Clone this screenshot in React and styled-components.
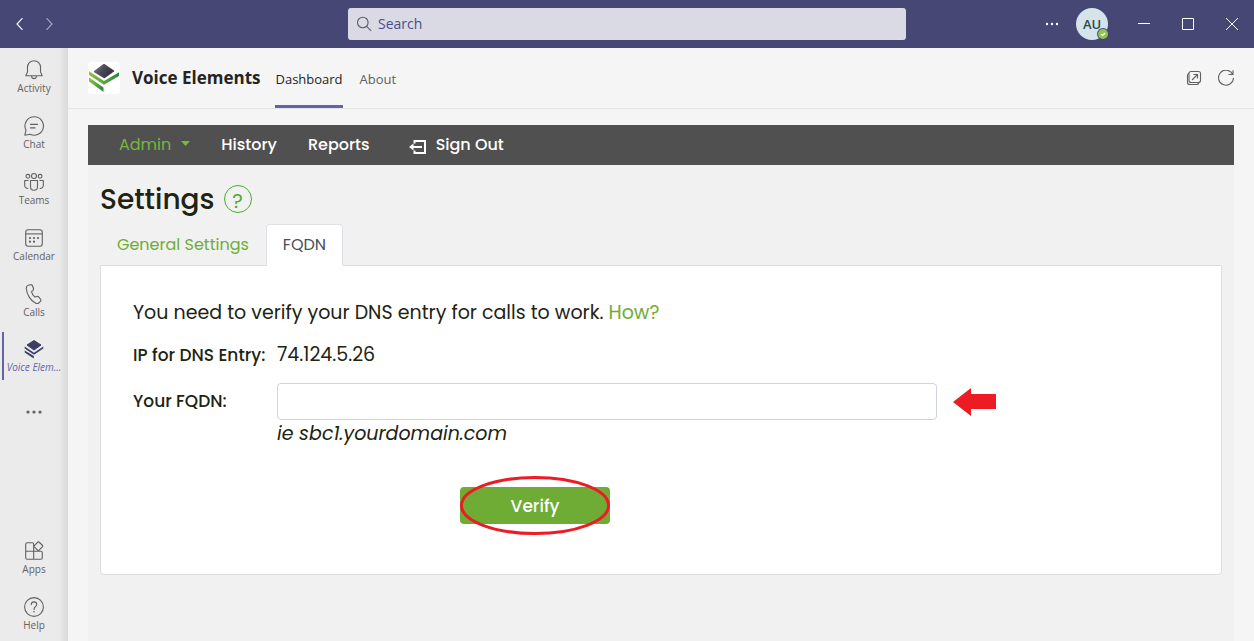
import React from "react";
import styled, { createGlobalStyle, css } from "styled-components";

const ui = `"Segoe UI", "Open Sans", "Noto Sans", sans-serif`;
const brand = `Poppins, Inter, "Liberation Sans", sans-serif`;

const GlobalStyle = createGlobalStyle`
  *, *::before, *::after { box-sizing: border-box; }
  body { margin: 0; background: #f5f5f5; font-family: ${ui}; color: #252423; }
  button, input { font: inherit; color: inherit; }
  button { margin: 0; padding: 0; border: 0; background: none; cursor: pointer; }
  a { text-decoration: none; color: inherit; }
  h1, h2, p { margin: 0; }
  svg { display: block; flex: none; }
`;

const Shell = styled.div`
  min-height: 100vh;
  display: flex;
  flex-direction: column;
`;

const TitleBar = styled.header`
  height: 48px;
  background: #464775;
  color: #fff;
  display: grid;
  grid-template-columns: 1fr minmax(0, 558px) 1fr;
  align-items: center;
`;

const HistoryButtons = styled.div`
  display: flex;
  padding-left: 5px;
`;

const HistoryButton = styled.button`
  width: 29px;
  height: 32px;
  display: grid;
  place-items: center;
  opacity: ${(p) => (p.$dim ? 0.5 : 0.95)};
`;

const SearchBox = styled.label`
  height: 32px;
  padding: 0 8px;
  display: flex;
  align-items: center;
  gap: 6px;
  border-radius: 3px;
  background: #dadae4;
  color: #5b5a66;
`;

const SearchInput = styled.input`
  flex: 1;
  min-width: 0;
  padding: 0;
  border: 0;
  outline: 0;
  background: transparent;
  font-size: 14px;
  line-height: 20px;
  &::placeholder { color: #4b4c8c; opacity: 1; }
`;

const WindowControls = styled.div`
  display: flex;
  justify-content: flex-end;
  align-items: center;
`;

const ControlButton = styled.button`
  width: 44px;
  height: 48px;
  display: grid;
  place-items: center;
`;

const MoreButton = styled(ControlButton)`
  width: 48px;
`;

const Avatar = styled.button`
  position: relative;
  width: 32px;
  height: 32px;
  margin-right: 14px;
  border-radius: 50%;
  background: #d5e4ea;
  color: #1f4a54;
  font-size: 13px;
  font-weight: 600;
  line-height: 32px;
`;

const Presence = styled.span`
  position: absolute;
  right: -1px;
  bottom: 0;
`;

const Body = styled.div`
  flex: 1;
  display: grid;
  grid-template-columns: 68px minmax(0, 1fr);
`;

const Rail = styled.nav`
  display: flex;
  flex-direction: column;
  justify-content: space-between;
  background: linear-gradient(to right, #ebebeb 60px, #e3e3e3 62px, #dadada 68px);
`;

const RailItem = styled.button`
  width: 100%;
  height: 56px;
  padding-top: 12px;
  display: flex;
  flex-direction: column;
  align-items: center;
  gap: 1px;
  color: #616161;
  font-size: 10px;
  line-height: 14px;
  white-space: nowrap;
  ${(p) =>
    p.$active &&
    css`
      padding-top: 11px;
      color: #6264a7;
      font-style: italic;
      background: linear-gradient(#6264a7, #6264a7) 2px 4px / 2px 48px no-repeat;
    `}
`;

const RailMore = styled(RailItem)`
  padding: 0;
  justify-content: center;
`;

const Main = styled.main`
  display: flex;
  flex-direction: column;
  background: #f5f5f5;
`;

const AppHeader = styled.div`
  height: 61px;
  padding: 0 20px;
  display: flex;
  align-items: center;
  border-bottom: 1px solid #e4e4e4;
`;

const AppLogo = styled.span`
  padding: 1px;
  background: #fff;
  border-radius: 3px;
`;

const AppName = styled.h1`
  margin: 0 15px 0 12px;
  font-size: 17px;
  font-weight: 700;
  line-height: 24px;
`;

const AppTabs = styled.div`
  display: flex;
  align-self: stretch;
  gap: 17px;
`;

const AppTab = styled.a`
  display: flex;
  align-items: center;
  padding-top: 4px;
  font-size: 13px;
  color: ${(p) => (p.$active ? "#252423" : "#616161")};
  border-bottom: 3px solid ${(p) => (p.$active ? "#6264a7" : "transparent")};
`;

const HeaderActions = styled.div`
  margin-left: auto;
  display: flex;
  gap: 16px;
  color: #616161;
`;

const Page = styled.div`
  flex: 1;
  margin: 16px 20px 0;
  background: #f1f1f1;
  color: #212312;
  font-family: ${brand};
`;

const MenuBar = styled.nav`
  height: 40px;
  padding: 0 31px;
  display: flex;
  align-items: center;
  gap: 31px;
  background: #505050;
  color: #fff;
  font-size: 16px;
  font-weight: 500;
`;

const MenuLink = styled.a`
  display: flex;
  align-items: center;
  gap: 10px;
  line-height: 24px;
  ${(p) => p.$accent && "color: #76b83f; font-weight: 400;"}
  ${(p) => p.$spaced && "margin-left: 8px;"}
`;

const Content = styled.div`
  padding: 17px 12px 32px;
`;

const Heading = styled.div`
  display: flex;
  align-items: center;
  gap: 9px;
  height: 36px;
  margin-bottom: 6px;
`;

const PageTitle = styled.h2`
  font-size: 28px;
  font-weight: 500;
  line-height: 36px;
`;

const HelpButton = styled.button`
  width: 28px;
  height: 28px;
  margin-bottom: 2px;
  border: 1px solid #48ad31;
  border-radius: 50%;
  color: #48ad31;
  font-size: 20px;
  line-height: 30px;
`;

const Tabs = styled.div`
  display: flex;
  margin-bottom: -1px;
`;

const Tab = styled.button`
  height: 42px;
  padding: 0 16px 2px;
  border: 1px solid transparent;
  border-bottom: 0;
  border-radius: 4px 4px 0 0;
  font-size: 16px;
  color: #6fac35;
  ${(p) =>
    p.$active &&
    css`
      position: relative;
      background: #fff;
      border-color: #dee2e6;
      color: #495057;
    `}
`;

const Card = styled.section`
  padding: 33px 32px 50px;
  background: #fff;
  border: 1px solid #dedede;
  border-radius: 0 0 4px 4px;
  font-size: 19px;
  font-weight: 400;
  line-height: 28px;
`;

const GreenLink = styled.a`
  color: #6fac35;
`;

const Form = styled.form`
  margin-top: 14px;
  display: grid;
  grid-template-columns: 144px minmax(0, 660px) 44px;
  align-items: center;
`;

const FieldName = styled.label`
  font-size: 17px;
  font-weight: 500;
  white-space: nowrap;
`;

const Value = styled.output`
  grid-column: 2 / -1;
`;

const TextField = styled.input`
  width: 100%;
  height: 37px;
  margin-top: 14px;
  padding: 0 12px;
  border: 1px solid #ced4da;
  border-radius: 4px;
  background: #fff;
`;

const FieldLabel = styled(FieldName)`
  padding-top: 12px;
`;

const Pointer = styled.span`
  padding: 14px 0 0 16px;
`;

const Hint = styled.em`
  grid-column: 2 / -1;
`;

const Actions = styled.div`
  grid-column: 2;
  display: flex;
  padding: 39px 0 0 183px;
`;

const VerifyWrap = styled.div`
  position: relative;
  svg { position: absolute; left: 0; top: -11px; pointer-events: none; }
`;

const VerifyButton = styled.button`
  width: 150px;
  height: 37px;
  border-radius: 4px;
  background: #6fac35;
  color: #fff;
  font-size: 17px;
  font-weight: 500;
`;

function Icon({ size = 20, width = 1.1, children, ...rest }) {
  return (
    <svg width={size} height={size} viewBox={`0 0 ${size} ${size}`} fill="none" stroke="currentColor" strokeWidth={width} aria-hidden="true" {...rest}>
      {children}
    </svg>
  );
}

const Bell = () => (
  <Icon>
    <path d="M10 .8c-3.800 0-6.500 2.800-6.500 6.500v4.600L1.800 15.800h16.400l-1.700-3.900V7.300c0-3.700-2.700-6.500-6.500-6.500z" strokeLinejoin="round" />
    <path d="M7.500 16.100c.2 1.500 1.200 2.500 2.500 2.500s2.300-1 2.500-2.500" />
  </Icon>
);
const Chat = () => (
  <Icon>
    <path d="M10.300.8a9.200 9.200 0 1 1-4.200 17.400L.8 19.200l1.200-5A9.200 9.200 0 0 1 10.300.8z" strokeLinejoin="round" />
    <path d="M6.500 8.400h7M6.500 11.900h4.500" strokeLinecap="round" />
  </Icon>
);
const Teams = () => (
  <Icon>
    <circle cx="10" cy="4" r="2.500" />
    <circle cx="3.900" cy="4.300" r="1.900" />
    <circle cx="16.100" cy="4.300" r="1.900" />
    <path d="M6.500 8.500h7v6.300a3.500 3.500 0 0 1-7 0zM4.500 8.500H.7v4.800c0 2 1.300 3.300 3.600 3.200M15.500 8.500h3.800v4.800c0 2-1.300 3.300-3.600 3.200" strokeLinejoin="round" />
  </Icon>
);
const Calendar = () => (
  <Icon>
    <rect x="1.700" y="1.700" width="16.600" height="16.600" rx="2.500" />
    <path d="M1.700 5.900h16.600" />
    <g fill="currentColor" stroke="none">
      <circle cx="10" cy="10" r="1.100" />
      <circle cx="14" cy="10" r="1.100" />
      <circle cx="6" cy="10" r="1.100" />
      <circle cx="6" cy="13.700" r="1.100" />
      <circle cx="10" cy="13.700" r="1.100" />
    </g>
  </Icon>
);
const Phone = () => (
  <Icon>
    <path d="M4.300 1.300 6.500.7c.9-.2 1.700.2 2 1.100l.9 2.500c.3.800.1 1.600-.5 2.100L7.500 7.700c.5 2 1.800 4.200 3.400 5.400l1.900-.6c.8-.2 1.500 0 2 .6l1.700 2.100c.5.700.5 1.600-.1 2.200l-1.200 1.200c-.9.900-2.300 1.200-3.500.6C6.400 16.600 2.800 10.400 2.300 4.500c-.1-1.500.7-2.800 2-3.200z" strokeLinejoin="round" />
  </Icon>
);
const Layers = () => (
  <svg width="20" height="20" viewBox="0 0 20 20" fill="#3d3e66" aria-hidden="true">
    <path d="M10 1.500 17 6 10 11 3 6z" strokeLinejoin="round" stroke="#3d3e66" />
    <path d="M.7 7.500 10 13.700l9.300-6.200v2.100L10 15.800.7 9.600zM.7 11.400 9.800 17.100v2.300L.7 13.500z" />
  </svg>
);
const Apps = () => (
  <Icon>
    <path d="M9.700 3.200a1.500 1.500 0 0 0-1.500-1.500H3.200a1.500 1.500 0 0 0-1.500 1.500v13.600a1.500 1.500 0 0 0 1.500 1.500h13.600a1.500 1.500 0 0 0 1.500-1.500v-5a1.500 1.500 0 0 0-1.500-1.500H1.700M9.700 3.200v15.100" />
    <path d="m14 1-3.700 3.700a.8.8 0 0 0 0 1.100l3.500 3.500a.8.8 0 0 0 1.100 0l3.700-3.700a.8.8 0 0 0 0-1.100L15 1a.7.7 0 0 0-1 0z" fill="#ebebeb" />
  </Icon>
);
const Help = () => (
  <Icon>
    <circle cx="10" cy="10" r="9.400" />
    <path d="M7.300 7.600c0-1.600 1.100-2.700 2.700-2.700s2.700 1 2.700 2.500c0 2.200-2.700 2.500-2.700 5" strokeLinecap="round" />
    <circle cx="10" cy="14.800" r=".8" fill="currentColor" stroke="none" />
  </Icon>
);
const Dots = ({ r = 1.5, gap = 6 }) => (
  <Icon>
    <g fill="currentColor" stroke="none">
      <circle cx={10 - gap} cy="10" r={r} />
      <circle cx="10" cy="10" r={r} />
      <circle cx={10 + gap} cy="10" r={r} />
    </g>
  </Icon>
);

const Logo = () => (
  <svg width="30" height="30" viewBox="0 0 30 30" aria-hidden="true">
    <defs>
      <linearGradient id="tile" x1="0" y1="0" x2="1" y2="0.4">
        <stop offset="0" stopColor="#7b7b84" />
        <stop offset="0.5" stopColor="#4a4a56" />
        <stop offset="1" stopColor="#34343f" />
      </linearGradient>
      <linearGradient id="leaf" x1="0" y1="0" x2="1" y2="0">
        <stop offset="0" stopColor="#8cc43c" />
        <stop offset="1" stopColor="#2f8544" />
      </linearGradient>
    </defs>
    <path d="M15 1.500 24.500 8 15.500 14.500 5.500 8.500z" fill="url(#tile)" stroke="url(#tile)" strokeWidth="1.500" strokeLinejoin="round" />
    <path d="M0 8.300 15 18 30 9.200v3.900L15 21.700 0 12z" fill="url(#leaf)" />
    <path d="M0 14.500 14.500 24.500v4.500L0 18.500z" fill="url(#leaf)" />
  </svg>
);

const railItems = [
  ["Activity", Bell],
  ["Chat", Chat],
  ["Teams", Teams],
  ["Calendar", Calendar],
  ["Calls", Phone],
  ["Voice Elem...", Layers],
];

export default function App() {
  return (
    <Shell>
      <GlobalStyle />
      <TitleBar>
        <HistoryButtons>
          <HistoryButton aria-label="Back">
            <Icon size={14} width={1.2}><path d="M9.500 1.200 4 7l5.500 5.800" /></Icon>
          </HistoryButton>
          <HistoryButton aria-label="Forward" $dim>
            <Icon size={14} width={1.2}><path d="M4.500 1.200 10 7l-5.500 5.800" /></Icon>
          </HistoryButton>
        </HistoryButtons>
        <SearchBox>
          <Icon size={16} width={1.1}><circle cx="6.800" cy="6.500" r="5.300" /><path d="m10.600 10.300 4.600 4.500" /></Icon>
          <SearchInput type="search" placeholder="Search" aria-label="Search" />
        </SearchBox>
        <WindowControls>
          <MoreButton aria-label="More options"><Dots r={1.2} gap={5} /></MoreButton>
          <Avatar aria-label="Account">
            AU
            <Presence>
              <svg width="12" height="12" viewBox="0 0 12 12" aria-hidden="true">
                <circle cx="6" cy="6" r="6" fill="#464775" />
                <circle cx="6" cy="6" r="5" fill="#92c353" />
                <path d="m4 6.100 1.500 1.400L8.100 5" fill="none" stroke="#fff" strokeWidth="1.200" />
              </svg>
            </Presence>
          </Avatar>
          <ControlButton aria-label="Minimize"><Icon size={12} width={1}><path d="M0 5.500h12" /></Icon></ControlButton>
          <ControlButton aria-label="Maximize"><Icon size={12} width={1}><path d="M.5.500h11v11H.5z" /></Icon></ControlButton>
          <ControlButton aria-label="Close"><Icon size={12} width={1}><path d="m0 0 12 12M12 0 0 12" /></Icon></ControlButton>
        </WindowControls>
      </TitleBar>

      <Body>
        <Rail aria-label="Apps">
          <div>
            {railItems.map(([label, Glyph]) => (
              <RailItem key={label} $active={Glyph === Layers}>
                <Glyph />
                {label}
              </RailItem>
            ))}
            <RailMore aria-label="More apps"><Dots r={1.6} gap={6} /></RailMore>
          </div>
          <div>
            <RailItem><Apps />Apps</RailItem>
            <RailItem><Help />Help</RailItem>
          </div>
        </Rail>

        <Main>
          <AppHeader>
            <AppLogo><Logo /></AppLogo>
            <AppName>Voice Elements</AppName>
            <AppTabs>
              <AppTab href="#dashboard" $active>Dashboard</AppTab>
              <AppTab href="#about">About</AppTab>
            </AppTabs>
            <HeaderActions>
              <button aria-label="Open in new window">
                <Icon size={16}>
                  <rect x="3" y="1.500" width="11.500" height="11" rx="2" />
                  <path d="M3 3.200c-1 .3-1.500 1-1.500 2v7c0 1.500.8 2.300 2.300 2.300h7c1 0 1.700-.5 2-1.500M6 10l5.500-5.500M7.500 4.500h4v4" />
                </Icon>
              </button>
              <button aria-label="Reload">
                <Icon size={16}>
                  <path d="M14.700 4.300A7.500 7.500 0 1 0 15.500 8M15 .3v4.200h-4.500" />
                </Icon>
              </button>
            </HeaderActions>
          </AppHeader>

          <Page>
            <MenuBar>
              <MenuLink href="#admin" $accent>
                Admin
                <svg width="9" height="8" viewBox="0 0 9 8" aria-hidden="true"><path d="M0 0h9L4.500 5z" fill="currentColor" /></svg>
              </MenuLink>
              <MenuLink href="#history">History</MenuLink>
              <MenuLink href="#reports">Reports</MenuLink>
              <MenuLink href="#signout" $spaced>
                <Icon size={17} width={2}>
                  <path d="M5.500 6.500V4H16v12H5.500v-2.500M2 10h11" />
                  <path d="M0 10 4.500 6.500v7z" fill="currentColor" stroke="none" />
                </Icon>
                Sign Out
              </MenuLink>
            </MenuBar>

            <Content>
              <Heading>
                <PageTitle>Settings</PageTitle>
                <HelpButton aria-label="Help with settings">?</HelpButton>
              </Heading>
              <Tabs role="tablist">
                <Tab role="tab" aria-selected="false">General Settings</Tab>
                <Tab role="tab" aria-selected="true" $active>FQDN</Tab>
              </Tabs>
              <Card>
                <p>
                  You need to verify your DNS entry for calls to work. <GreenLink href="#how">How?</GreenLink>
                </p>
                <Form onSubmit={(e) => e.preventDefault()}>
                  <FieldName htmlFor="dns-ip">IP for DNS Entry:</FieldName>
                  <Value id="dns-ip">74.124.5.26</Value>
                  <FieldLabel htmlFor="fqdn">Your FQDN:</FieldLabel>
                  <TextField id="fqdn" type="text" />
                  <Pointer>
                    <svg width="44" height="28" viewBox="0 0 44 28" aria-hidden="true">
                      <path d="M0 14 18 0v6h25v15H18v7z" fill="#ed1c24" />
                    </svg>
                  </Pointer>
                  <Hint>ie sbc1.yourdomain.com</Hint>
                  <Actions>
                    <VerifyWrap>
                      <VerifyButton type="submit">Verify</VerifyButton>
                      <svg width="150" height="59" viewBox="0 0 150 59" aria-hidden="true">
                        <ellipse cx="75" cy="29.500" rx="73.500" ry="28" fill="none" stroke="#ed1c24" strokeWidth="3" />
                      </svg>
                    </VerifyWrap>
                  </Actions>
                </Form>
              </Card>
            </Content>
          </Page>
        </Main>
      </Body>
    </Shell>
  );
}
